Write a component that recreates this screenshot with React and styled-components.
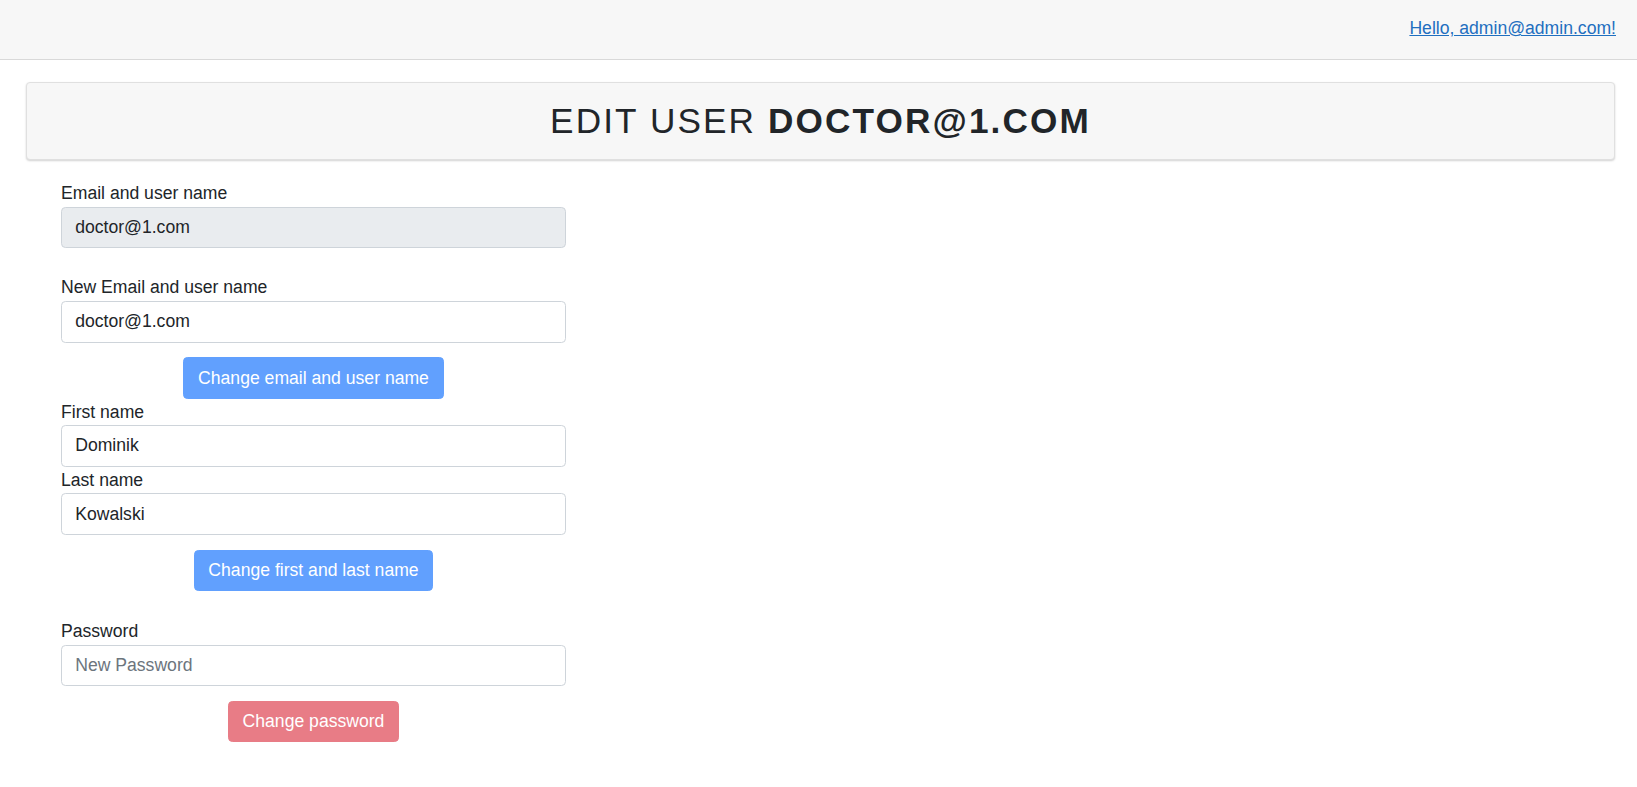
import React from "react";
import styled, { createGlobalStyle } from "styled-components";

const GlobalStyle = createGlobalStyle`
  html, body {
    margin: 0;
    padding: 0;
    background: #ffffff;
  }
  body {
    font-family: "Liberation Sans", Arial, Helvetica, sans-serif;
    font-size: 17.6px;
    line-height: 1.5;
    color: #212529;
  }
  * { box-sizing: border-box; }
`;

const Navbar = styled.header`
  height: 60px;
  background: #f7f7f7;
  border-bottom: 1px solid #d9d9d9;
  display: flex;
  align-items: center;
  justify-content: flex-end;
  padding: 0 21px 2px 0;
`;

const UserLink = styled.a`
  color: #1f6fc0;
  text-decoration: underline;
  font-size: 17.6px;
  cursor: pointer;
`;

const Main = styled.main`
  padding: 22px 22px 0 26px;
`;

const TitleCard = styled.div`
  background: #f7f7f7;
  border: 1px solid #e0e0e0;
  border-radius: 4px;
  box-shadow: 0 1px 2px rgba(0, 0, 0, 0.18);
  padding: 17px 16px;
  text-align: center;
`;

const Title = styled.h2`
  margin: 0;
  font-size: 35.2px;
  line-height: 1.2;
  font-weight: 400;
  letter-spacing: 0.06em;
  text-transform: uppercase;
  color: #212529;
`;

const Strong = styled.strong`
  font-weight: 700;
`;

const Form = styled.div`
  width: 505px;
  margin: 20px 0 0 35px;
  display: flex;
  flex-direction: column;
`;

const Group = styled.div`
  display: flex;
  flex-direction: column;
  margin-top: ${(p) => p.$gap || 0}px;
`;

const Label = styled.label`
  display: block;
  height: 26.4px;
  line-height: 26.4px;
  font-size: 17.6px;
  color: #212529;
`;

const Input = styled.input`
  display: block;
  width: 100%;
  height: 41.8px;
  padding: 6.6px 13.2px;
  font-family: inherit;
  font-size: 17.6px;
  line-height: 1.5;
  color: #212529;
  background: ${(p) => (p.disabled ? "#e9ecef" : "#ffffff")};
  border: 1px solid #ced4da;
  border-radius: 4.4px;
  outline: none;
  &::placeholder {
    color: #6c757d;
    opacity: 1;
  }
`;

const ButtonRow = styled.div`
  display: flex;
  justify-content: center;
  margin-top: 14.5px;
`;

const Button = styled.button`
  font-family: inherit;
  font-size: 17.6px;
  line-height: 1.5;
  padding: 6.6px 13.8px;
  border-radius: 4.4px;
  color: #ffffff;
  background: ${(p) => (p.$variant === "danger" ? "#e87c86" : "#61a0fe")};
  border: 1px solid ${(p) => (p.$variant === "danger" ? "#e87c86" : "#61a0fe")};
  cursor: default;
`;

export default function App() {
  return (
    <>
      <GlobalStyle />
      <Navbar>
        <UserLink>Hello, admin@admin.com!</UserLink>
      </Navbar>
      <Main>
        <TitleCard>
          <Title>
            Edit user <Strong>doctor@1.com</Strong>
          </Title>
        </TitleCard>
        <Form>
          <Group>
            <Label>Email and user name</Label>
            <Input disabled value="doctor@1.com" readOnly />
          </Group>
          <Group $gap={26}>
            <Label>New Email and user name</Label>
            <Input defaultValue="doctor@1.com" />
          </Group>
          <ButtonRow>
            <Button>Change email and user name</Button>
          </ButtonRow>
          <Group>
            <Label>First name</Label>
            <Input defaultValue="Dominik" />
          </Group>
          <Group>
            <Label>Last name</Label>
            <Input defaultValue="Kowalski" />
          </Group>
          <ButtonRow>
            <Button>Change first and last name</Button>
          </ButtonRow>
          <Group $gap={27}>
            <Label>Password</Label>
            <Input type="password" placeholder="New Password" />
          </Group>
          <ButtonRow>
            <Button $variant="danger">Change password</Button>
          </ButtonRow>
        </Form>
      </Main>
    </>
  );
}
